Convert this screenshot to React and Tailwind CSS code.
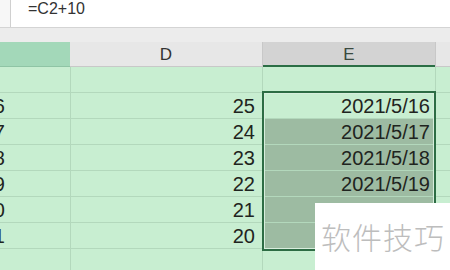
import React from "react";

const rows = [
  { c: "", d: "", e: "", kind: "plain" },
  { c: "16", d: "25", e: "2021/5/16", kind: "active" },
  { c: "17", d: "24", e: "2021/5/17", kind: "sel" },
  { c: "18", d: "23", e: "2021/5/18", kind: "sel" },
  { c: "19", d: "22", e: "2021/5/19", kind: "sel" },
  { c: "20", d: "21", e: "", kind: "sel" },
  { c: "21", d: "20", e: "", kind: "sel" },
  { c: "", d: "", e: "", kind: "plain" },
];

export default function App() {
  return (
    <div
      className="relative w-[450px] h-[270px] overflow-hidden bg-[#c8eed1] text-[#1f2420]"
      style={{ fontFamily: '"Liberation Sans", "Noto Sans CJK SC", sans-serif' }}
    >
      {/* formula bar */}
      <div className="flex h-[28px] bg-white border-b border-[#d4d4d4]">
        <div className="w-[11px] h-full bg-[#f7f7f7] border-r border-[#d0d0d0]" />
        <div className="flex items-start pl-[17px] pt-0 text-[16px] leading-[18px] text-[#333]">
          =C2+10
        </div>
      </div>
      {/* gray band */}
      <div className="h-[14px] bg-[#ececec]" />
      {/* column headers */}
      <div className="flex h-[25px] text-[17px]">
        <div className="w-[70px] bg-[#a3d8b9] border-b border-[#8fc4a5]" />
        <div className="w-[193px] bg-[#e7e7e7] border-b border-r border-[#c8c8c8] flex items-center justify-center text-[#333] pt-[2px]">
          D
        </div>
        <div className="w-[172px] bg-[#d3d3d3] border-b-2 border-[#2b6e45] flex items-center justify-center text-[#3a4a40] pt-[2px]">
          E
        </div>
        <div className="flex-1 bg-[#e7e7e7] border-b border-l border-[#c8c8c8]" />
      </div>
      {/* rows */}
      {rows.map((r, i) => (
        <div key={i} className="flex h-[26px] text-[20px] leading-none">
          <div className="w-[71px] flex border-b border-r border-[#b3d8bc] bg-[#c8eed1]">
            <div className="w-[5px] flex justify-end items-end pb-[2px] whitespace-nowrap">
              {r.c}
            </div>
          </div>
          <div className="w-[192px] flex justify-end items-end pr-[7px] pb-[2px] border-b border-r border-[#b3d8bc] bg-[#c8eed1]">
            {r.d}
          </div>
          <div
            className={
              "w-[172px] flex justify-end items-end pr-[5px] pb-[2px] border-b border-[#b3d8bc] " +
              (r.kind === "sel" ? "bg-[#9dbba2]" : "bg-[#c8eed1]")
            }
          >
            {r.e}
          </div>
          <div className="flex-1 border-b border-l border-[#b3d8bc] bg-[#c8eed1]" />
        </div>
      ))}
      {/* selection border */}
      <div className="absolute left-[262px] top-[91px] w-[174px] h-[160px] border-2 border-[#2d6c44] pointer-events-none">
        <div className="w-full h-full border border-[#d8eedd]" />
      </div>
      {/* watermark */}
      <div className="absolute left-[315px] top-[203px] w-[135px] h-[67px] bg-white flex items-center pl-[6px]">
        <span
          className="text-[30px] tracking-[1px] text-[#bdbdbd]"
          style={{ fontFamily: '"Noto Sans CJK SC", sans-serif', fontWeight: 300 }}
        >
          软件技巧
        </span>
      </div>
    </div>
  );
}
